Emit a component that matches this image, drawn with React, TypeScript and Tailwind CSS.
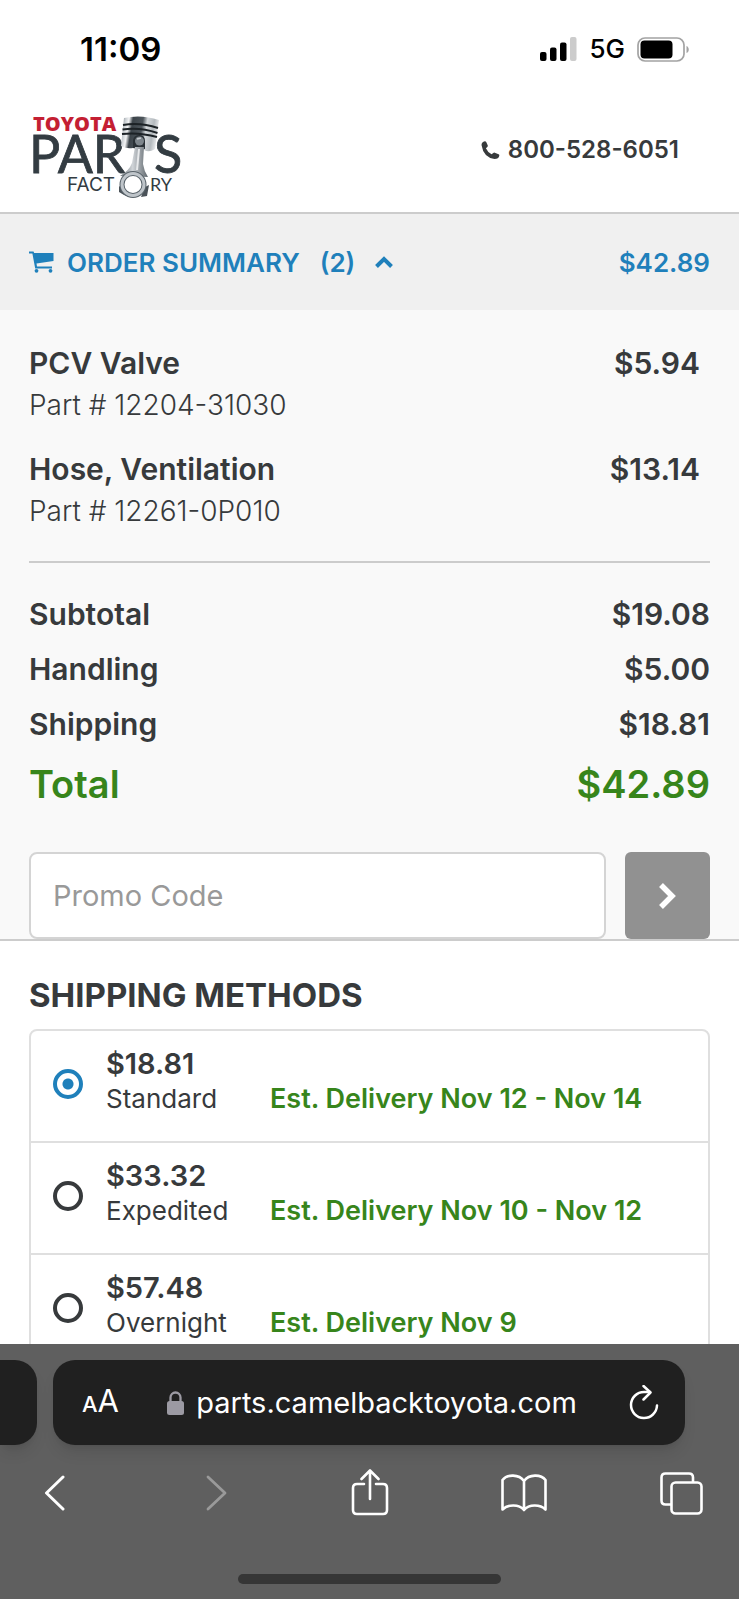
import { useState } from "react";

interface Part {
  name: string;
  number: string;
  price: string;
}

interface ShippingMethod {
  id: string;
  name: string;
  price: string;
  estimate: string;
}

const parts: Part[] = [
  { name: "PCV Valve", number: "12204-31030", price: "$5.94" },
  { name: "Hose, Ventilation", number: "12261-0P010", price: "$13.14" },
];

const charges = [
  { label: "Subtotal", amount: "$19.08" },
  { label: "Handling", amount: "$5.00" },
  { label: "Shipping", amount: "$18.81" },
];

const shippingMethods: ShippingMethod[] = [
  { id: "standard", name: "Standard", price: "$18.81", estimate: "Est. Delivery Nov 12 - Nov 14" },
  { id: "expedited", name: "Expedited", price: "$33.32", estimate: "Est. Delivery Nov 10 - Nov 12" },
  { id: "overnight", name: "Overnight", price: "$57.48", estimate: "Est. Delivery Nov 9" },
];

const StatusBar = () => (
  <div className="flex h-[98px] shrink-0 items-center justify-between pl-20 pr-[49px] text-black">
    <span className="text-[33px] font-semibold leading-10">11:09</span>
    <div className="flex items-center gap-3">
      <svg width="37" height="24" viewBox="0 0 37 24" aria-hidden="true">
        <rect x="0" y="15" width="6.500" height="9" rx="2" />
        <rect x="10" y="10.500" width="6.500" height="13.500" rx="2" />
        <rect x="20" y="5.500" width="6.500" height="18.500" rx="2" />
        <rect x="30" y="0" width="6.500" height="24" rx="2" fill="#cccccc" />
      </svg>
      <span className="text-[26px] font-medium leading-8">5G</span>
      <svg width="53" height="25" viewBox="0 0 53 25" aria-hidden="true">
        <rect x="1" y="1" width="46" height="23" rx="7" fill="none" stroke="#a3a3a3" strokeWidth="1.700" />
        <rect x="3.500" y="3.500" width="32" height="18" rx="4" />
        <path d="M49.500 9c3 1.200 3 6 0 7z" fill="#a3a3a3" />
      </svg>
    </div>
  </div>
);

const Logo = () => (
  <svg width="160" height="96" viewBox="-4 -8 160 96" role="img" aria-label="Toyota Parts Factory">
    <defs>
      <linearGradient id="steel" x1="0" x2="1" y1="0" y2="0.150">
        <stop offset="0" stopColor="#6b7278" />
        <stop offset="0.130" stopColor="#c9ced2" />
        <stop offset="0.220" stopColor="#f3f4f5" />
        <stop offset="0.320" stopColor="#3c444a" />
        <stop offset="0.580" stopColor="#4d555b" />
        <stop offset="0.700" stopColor="#d5d9dc" />
        <stop offset="0.880" stopColor="#b4babe" />
        <stop offset="1" stopColor="#e2e4e6" />
      </linearGradient>
      <linearGradient id="rod" x1="0" x2="1" y1="0" y2="0">
        <stop offset="0" stopColor="#6d757b" />
        <stop offset="0.450" stopColor="#d0d4d8" />
        <stop offset="1" stopColor="#5f676d" />
      </linearGradient>
    </defs>
    <text x="1" y="16" fontFamily="'Open Sans', sans-serif" fontSize="20" fontWeight="800" fill="#c41f33">
      TOYOTA
    </text>
    <g fontFamily="Lato, sans-serif" fill="#333c42">
      <text x="-3" y="58" fontSize="52" stroke="#333c42" strokeWidth="0.800">PAR</text>
      <text x="122" y="58" fontSize="52" stroke="#333c42" strokeWidth="0.800">S</text>
      <text x="35" y="76" fontFamily="Inter, sans-serif" fontSize="19">FACT</text>
      <text x="118" y="76" fontSize="18">RY</text>
    </g>
    {/* piston */}
    <path d="M92 3Q109 -1 127 5L123 34Q117 38 112 35L101 33Q94 34 89 31Z" fill="url(#steel)" />
    <path d="M91 10Q108 7 126 13M90.500 14.500Q108 12 125.500 18M90 19Q107 17 125 22" fill="none" stroke="#1c2226" strokeWidth="2" />
    <path d="M101 33V25Q102 20 107.500 20T113 26V34Z" fill="#2a3136" />
    <circle cx="107.500" cy="26" r="4.500" fill="#7d858b" />
    <path d="M105 24L109 23" stroke="#c9ced2" strokeWidth="1.500" />
    {/* connecting rod */}
    <path d="M103 32H112L111 49Q112 56 116 62L88 61Q97 56 100 48Z" fill="url(#rod)" />
    <path d="M107 34L105 55" stroke="#e8eaec" strokeWidth="2" />
    <path d="M87 72L90 68L97 82L92 80L87 77ZM113 72L117 70L115 81L109 82Z" fill="#4a5258" />
    <circle cx="101" cy="69.500" r="11" fill="#ffffff" stroke="#59636a" strokeWidth="5" />
    <circle cx="101" cy="69.500" r="11" fill="none" stroke="#bfc5ca" strokeWidth="3" />
  </svg>
);

const Header = () => (
  <header className="flex h-[116px] items-center justify-between border-b-2 border-[#cccccc] pb-2 pl-7 pr-[60px]">
    <a href="#home" className="pt-2">
      <Logo />
    </a>
    <a href="tel:800-528-6051" className="flex items-center gap-2 pb-0.5 text-[24px] font-semibold leading-8">
      <svg width="19" height="19" viewBox="0 0 19 19" fill="currentColor" aria-hidden="true">
        <path d="M0.500 4Q0.700 1 3.800 0.300Q4.800 0.200 5.200 1.100L6.800 4.400Q7 5.300 6.300 5.900L4.900 7.300Q6.500 11.200 10.600 13.200L12.300 11.900Q13 11.400 13.800 11.700L17.600 13.300Q18.500 13.800 18.300 14.700Q17.600 18 13.500 18Q2.500 16.500 0.500 4Z" />
      </svg>
      800-528-6051
    </a>
  </header>
);

const OrderSummary = () => {
  const [promo, setPromo] = useState("");

  return (
    <section className="border-b-2 border-[#cccccc] bg-[#f9f9f9]">
      <button
        type="button"
        className="flex h-[96px] w-full items-center bg-[#f0f0f0] px-[29px] text-[26px] font-semibold text-[#1f80bb]"
      >
        <svg width="25" height="22" viewBox="0 0 25 22" fill="currentColor" aria-hidden="true">
          <path d="M0 0.500H4.500L5.200 2H24.500V10L7.500 12.500L8 15.500H23V17.500H6.200L3.400 2.500H0Z" />
          <circle cx="7.500" cy="19.800" r="1.900" />
          <circle cx="21.500" cy="19.800" r="1.900" />
        </svg>
        <span className="ml-[13px]">ORDER SUMMARY</span>
        <span className="ml-5">(2)</span>
        <svg className="ml-5" width="18" height="12" viewBox="0 0 18 12" aria-hidden="true">
          <path d="M1.500 10.500L9 3L16.500 10.500" fill="none" stroke="currentColor" strokeWidth="4" />
        </svg>
        <span className="ml-auto">$42.89</span>
      </button>

      <div className="px-[29px] pt-8">
        <ul className="flex flex-col gap-[22px] border-b-2 border-[#cccccc] pb-[29px]">
          {parts.map((part) => (
            <li key={part.number} className="text-[30px] leading-[42px]">
              <div className="flex justify-between pr-2.5 font-semibold">
                <span>{part.name}</span>
                <span>{part.price}</span>
              </div>
              <p className="text-[28px] font-light">Part # {part.number}</p>
            </li>
          ))}
        </ul>

        <div className="pt-6">
          {charges.map((charge) => (
            <div key={charge.label} className="flex justify-between text-[30px] font-semibold leading-[55px]">
              <span>{charge.label}</span>
              <span>{charge.amount}</span>
            </div>
          ))}
          <div className="flex justify-between text-[38px] font-semibold leading-[64px] text-[#37851b]">
            <span>Total</span>
            <span>$42.89</span>
          </div>
        </div>

        <form className="mt-9 flex gap-[19px]" onSubmit={(e) => e.preventDefault()}>
          <input
            type="text"
            value={promo}
            onChange={(e) => setPromo(e.target.value)}
            placeholder="Promo Code"
            aria-label="Promo Code"
            className="h-[87px] min-w-0 flex-1 rounded-lg border-2 border-[#d4d4d4] bg-white px-[22px] text-[29px] placeholder:text-[#999999] focus:outline-none"
          />
          <button
            type="submit"
            aria-label="Apply promo code"
            className="flex h-[87px] w-[85px] items-center justify-center rounded-md bg-[#919191] text-white"
          >
            <svg width="20" height="28" viewBox="0 0 20 28" fill="none" stroke="currentColor" strokeWidth="5.500">
              <path d="M3 3L14 14L3 25" />
            </svg>
          </button>
        </form>
      </div>
    </section>
  );
};

const ShippingMethods = () => {
  const [selected, setSelected] = useState("standard");

  return (
    <section className="px-[29px] pt-[34px] pb-10">
      <h2 className="text-[33px] font-bold leading-10">SHIPPING METHODS</h2>
      <div className="mt-3.5 divide-y-2 divide-[#dfdfdf] rounded-lg border-2 border-[#dfdfdf]">
        {shippingMethods.map((method) => (
          <label
            key={method.id}
            className="flex h-[112px] items-center pb-1 pl-[22px] text-[26px] leading-[35px] last:h-[110px]"
          >
            <input
              type="radio"
              name="shipping"
              value={method.id}
              checked={selected === method.id}
              onChange={() => setSelected(method.id)}
              className="size-[30px] shrink-0 appearance-none rounded-full border-4 border-[#373a3c] checked:border-[#1f80bb] checked:bg-[radial-gradient(circle,#1f80bb_5px,transparent_6px)]"
            />
            <span className="ml-[23px] flex-1 pb-1.5">
              <span className="block text-[29px] font-semibold leading-[35px]">{method.price}</span>
              <span className="flex">
                <span className="w-[164px]">{method.name}</span>
                <span className="text-[27px] font-semibold text-[#37851b]">{method.estimate}</span>
              </span>
            </span>
          </label>
        ))}
      </div>
    </section>
  );
};

const BrowserBar = () => (
  <footer className="shrink-0 bg-[#5f5f5f] pt-4 text-white">
    <div className="flex h-[85px] gap-4">
      <div className="w-[37px] rounded-r-[22px] bg-[#202020] shadow-lg" />
      <div className="mr-[54px] flex flex-1 items-center justify-between rounded-[22px] bg-[#202020] pl-[29px] pr-[26px] shadow-lg">
        <button type="button" aria-label="Page settings" className="flex items-baseline">
          <span className="text-[22px] font-medium leading-10">A</span>
          <span className="text-[31px] leading-10">A</span>
        </button>
        <div className="flex items-center gap-3 pr-1">
          <svg width="17" height="24" viewBox="0 0 17 24" aria-hidden="true">
            <rect x="0" y="10" width="17" height="14" rx="2.500" fill="#9c9aa3" />
            <path d="M3.500 11V6.500a5 5 0 0 1 10 0V11" fill="none" stroke="#9c9aa3" strokeWidth="2.300" />
          </svg>
          <span className="text-[29px] leading-10">parts.camelbacktoyota.com</span>
        </div>
        <button type="button" aria-label="Reload">
          <svg width="30" height="36" viewBox="0 0 30 36" fill="none" stroke="currentColor" strokeWidth="2.500" strokeLinecap="round" strokeLinejoin="round">
            <path d="M28 20.500a13 13 0 1 1-13-13.500h6" />
            <path d="M14.500 1L21.500 7.500L14.500 14.500" />
          </svg>
        </button>
      </div>
    </div>

    <nav className="flex h-24 items-center justify-between pl-11 pr-9" aria-label="Browser">
      <button type="button" aria-label="Back">
        <svg width="22" height="36" viewBox="0 0 22 36" fill="none" stroke="currentColor" strokeWidth="3" strokeLinecap="round" strokeLinejoin="round">
          <path d="M19 2L2.500 18L19 34" />
        </svg>
      </button>
      <button type="button" aria-label="Forward" className="ml-[27px] text-[#9a9a9a]">
        <svg width="22" height="36" viewBox="0 0 22 36" fill="none" stroke="currentColor" strokeWidth="2.800" strokeLinecap="round" strokeLinejoin="round">
          <path d="M2 2L19 18L2 34" />
        </svg>
      </button>
      <button type="button" aria-label="Share" className="ml-2.5">
        <svg width="38" height="48" viewBox="0 0 38 48" fill="none" stroke="currentColor" strokeWidth="2.600" strokeLinecap="round" strokeLinejoin="round">
          <path d="M13 15H6q-4 0-4 4V41q0 4 4 4H32q4 0 4-4V19q0-4-4-4H25" />
          <path d="M19 30V2M10.500 10L19 1.500L27.500 10" />
        </svg>
      </button>
      <button type="button" aria-label="Bookmarks">
        <svg width="46" height="38" viewBox="0 0 46 38" fill="none" stroke="currentColor" strokeWidth="2.600" strokeLinejoin="round">
          <path d="M23 7C18 0 6 0 1.500 6V35.500C7 30 18 30 23 36C28 30 39 30 44.500 35.500V6C40 0 28 0 23 7ZM23 7V36" />
        </svg>
      </button>
      <button type="button" aria-label="Tabs">
        <svg width="43" height="43" viewBox="0 0 43 43" fill="none" stroke="currentColor" strokeWidth="2.600">
          <rect x="11.500" y="10.500" width="30" height="31" rx="4" />
          <path d="M33 10.500V5.500q0-4-4-4H5.500q-4 0-4 4V28.500q0 4 4 4H11.500" />
        </svg>
      </button>
    </nav>

    <div className="mx-auto mt-[33px] mb-[15px] h-2.5 w-[263px] rounded-full bg-[#363636]" />
  </footer>
);

export default function App() {
  return (
    <div className="flex h-screen flex-col bg-white font-['Inter',sans-serif] text-[#373a3c]">
      <StatusBar />
      <main className="min-h-0 flex-1 overflow-y-auto [scrollbar-width:none]">
        <Header />
        <OrderSummary />
        <ShippingMethods />
      </main>
      <BrowserBar />
    </div>
  );
}
